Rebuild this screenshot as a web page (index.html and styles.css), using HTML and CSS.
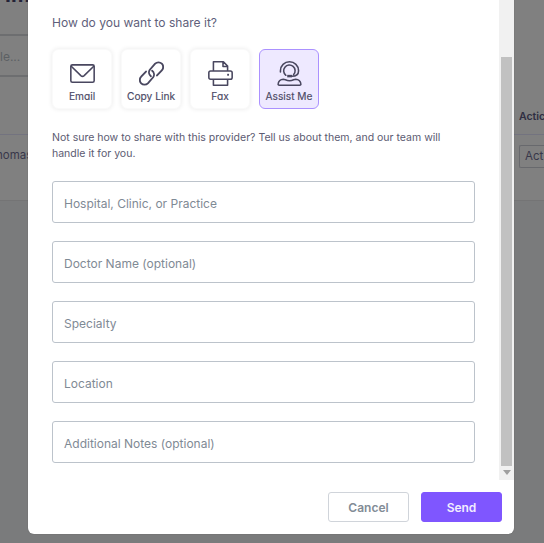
FILE: index.html
```html
<!DOCTYPE html>
<html lang="en">
<head>
<meta charset="utf-8">
<title>Share</title>
<link rel="stylesheet" href="styles.css">
</head>
<body>
<div class="page">
  <div class="panel">
    <h1 class="title">Im</h1>
    <div class="search"><span>le...</span></div>
    <div class="thead"><span>Actic</span></div>
    <div class="trow"><span class="name">homas</span><span class="action">Act</span></div>
  </div>
</div>
<div class="modal" role="dialog">
  <div class="scroll">
    <div class="content">
      <h2 class="question"><span>How do you want to share it?</span></h2>
      <div class="tiles">
        <button class="tile">
          <svg viewBox="0 0 24 24"><rect x="0.8" y="3.7" width="22.4" height="16.7" rx="1.5"/><path d="M1.2 5l9.2 9q1.6 1.400 3.200 0l9.200-9"/></svg>
          <span>Email</span>
        </button>
        <button class="tile link">
          <svg viewBox="0 0 24 24"><path d="M11.400 14.600a4.600 4.600 0 0 1-1-6.200L15.500 2.600a4.500 4.500 0 0 1 6.400 6.400l-4.600 4.900M12.600 9.400a4.600 4.600 0 0 1 1 6.200l-5.100 5.800a4.500 4.500 0 0 1-6.400-6.400l4.600-4.900"/></svg>
          <span>Copy Link</span>
        </button>
        <button class="tile">
          <svg viewBox="0 0 24 24"><path d="M5.200 9.400V.8h9.600l4 4v4.600M14.400 1v4.200h4.200M5 17.500H2.500Q.8 17.500.8 15.800v-4.500q0-1.700 1.700-1.700h19q1.700 0 1.700 1.700v4.500q0 1.700-1.700 1.700H19M3.800 17.500h16.400M5.200 17.500v5.700h13.600v-5.700"/><path class="dot" d="M18.400 12.300h1.800v1.800h-1.800z"/></svg>
          <span>Fax</span>
        </button>
        <button class="tile selected">
          <svg viewBox="0 0 24 24"><path d="M3.300 10.500V9.300a8.700 8.500 0 0 1 17.400 0c0 3.500-2.700 5.300-6.500 5.300M8.500 13.700A5.500 5.500 0 1 1 16 13M2.300 23.200c-1 0-1.400-.5-1.200-1.400.5-2.800 2.200-4.100 5-4.300 1.700 0 2.600 1.400 5.900 1.400s4.200-1.400 5.900-1.400c2.800.2 4.500 1.500 5 4.300.2.900-.2 1.400-1.200 1.400z"/><path class="dot" d="M9.800 13.300h4.600v2.400H9.800z"/></svg>
          <span>Assist Me</span>
        </button>
      </div>
      <p class="help">Not sure how to share with this provider? Tell us about them, and our team will handle it for you.</p>
      <div class="fields">
        <div class="field">Hospital, Clinic, or Practice</div>
        <div class="field">Doctor Name (optional)</div>
        <div class="field">Specialty</div>
        <div class="field">Location</div>
        <div class="field">Additional Notes (optional)</div>
      </div>
    </div>
    <div class="bar"><div class="thumb"></div><div class="arrow"></div></div>
  </div>
  <div class="footer">
    <button class="btn cancel">Cancel</button>
    <button class="btn send">Send</button>
  </div>
</div>
</body>
</html>
```

FILE: styles.css
```css
* { box-sizing: border-box; }
html, body { margin: 0; height: 100%; overflow: hidden; }
body { background: #7a7b7c; font-family: Inter, sans-serif; color: #5f5f7b; }
button { font-family: inherit; margin: 0; }
.page { height: 543px; overflow: hidden; }
.panel { height: 201px; background: #808080; border-bottom: 1px solid #747475; overflow: hidden; }
.title { margin: -17px 0 0 5px; height: 51px; font-size: 21px; line-height: 24px; font-weight: 700; color: #232237; }
.search { height: 43px; width: 400px; border: solid #6d6e70; border-width: 2px 0; font-size: 12px; line-height: 41px; color: #5d6064; }
.thead { height: 58px; display: flex; justify-content: flex-end; align-items: flex-end; padding-bottom: 11px; border-bottom: 1px solid #73737f; font-size: 10.500px; line-height: 12px; font-weight: 600; color: #2f2e42; }
.thead span { width: 25px; }
.trow { display: flex; justify-content: space-between; padding-top: 10px; font-size: 11.500px; color: #38374a; }
.name { line-height: 20px; margin-left: -4px; }
.action { width: 25px; height: 23px; border: 1px solid #68696d; border-right: 0; border-radius: 2px 0 0 2px; padding-left: 5px; line-height: 21px; }
.modal { position: absolute; left: 28px; top: 0; width: 486px; height: 534px; background: #fff; border-radius: 0 0 6px 6px; overflow: hidden; box-shadow: 0 0 1px #555; }
.scroll { display: flex; height: 480px; }
.content { flex: 1; padding: 15px 24px 0; }
.question { margin: 0; height: 34px; font-size: 12.050px; line-height: 16px; font-weight: 400; white-space: nowrap; }
.tiles { display: flex; gap: 9px; }
.tile { width: 60px; height: 60px; padding: 11px 0 0; display: flex; flex-direction: column; align-items: center; background: #fff; border: 1px solid #fafafa; border-radius: 6px; box-shadow: 0 0 5px rgba(0,0,0,.09); color: #4b4965; }
.tile svg { width: 25px; height: 25px; fill: none; stroke: #49475f; stroke-width: 1.500; stroke-linejoin: round; stroke-linecap: round; }
.tile.link svg { stroke-width: 1.800; }
.tile svg .dot { fill: #49475f; stroke: none; }
.tile span { margin-top: 3px; font-size: 10.200px; line-height: 14px; white-space: nowrap; font-feature-settings: "cv11"; -webkit-text-stroke: .15px #4b4965; }
.tile.selected { background: #eee9ff; border-color: #ab91ff; box-shadow: none; }
.help { margin: 21px 0 19px; width: 410px; font-size: 10.530px; line-height: 16px; color: #5c5b72; }
.fields { display: flex; flex-direction: column; gap: 18px; }
.field { height: 42px; width: 423px; border: 1px solid #bcc3cb; border-radius: 3px; padding-left: 11px; font-size: 12px; line-height: 43px; color: #7f8a95; }
.bar { width: 15px; background: #f1f1f1; padding: 57px 2px 0; display: flex; flex-direction: column; align-items: center; }
.thumb { width: 11px; height: 409px; background: #c1c1c1; }
.arrow { margin-top: 4px; border: 4.500px solid transparent; border-top: 5px solid #a0a0a0; border-bottom: 0; }
.footer { display: flex; justify-content: flex-end; gap: 12px; padding: 12px 12px 0 0; }
.btn { width: 81px; height: 30px; border-radius: 3px; font-size: 12px; font-weight: 600; padding: 0; }
.cancel { background: #fff; border: 1px solid #d0d4da; color: #828c96; }
.send { background: #7f56ff; border: 1px solid #7f56ff; color: #f2edff; }
```
